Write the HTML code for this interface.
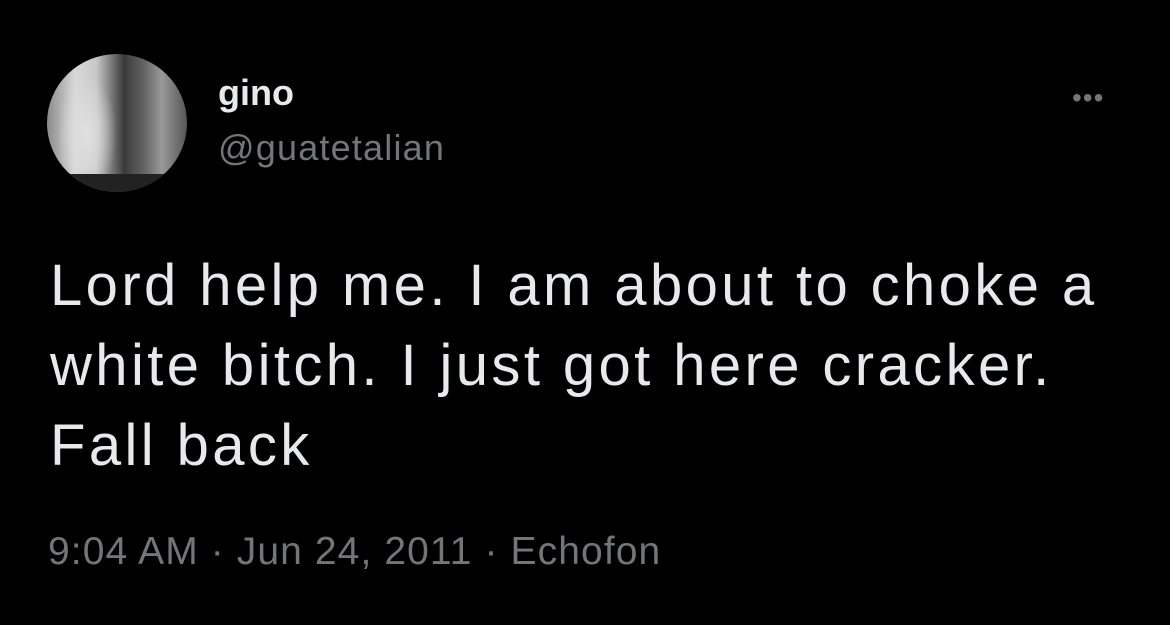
<!DOCTYPE html>
<html><head><style>
body{margin:0;width:1170px;height:625px;background:#000;overflow:hidden;font-family:"Liberation Sans",sans-serif;position:relative}
.av{position:absolute;left:47px;top:54px;width:140px;height:138px;border-radius:50%;overflow:hidden;background:radial-gradient(ellipse 30px 60px at 40px 80px,#e0e0e0,rgba(200,200,200,0) 100%),linear-gradient(90deg,#8a8a8a 0%,#d8d8d8 20%,#c8c8c8 35%,#3a3a3a 55%,#666 70%,#999 82%,#555 100%)}
.av:after{content:"";position:absolute;left:0;right:0;bottom:0;height:18px;background:#222}
.name{position:absolute;left:218px;top:72px;color:#e7e9ea;font-weight:bold;font-size:36px}
.handle{position:absolute;left:218px;top:127px;color:#71767b;font-size:36px;letter-spacing:1.2px}
.dots{position:absolute;left:1072px;top:82px;color:#71767b;font-size:28px;letter-spacing:1px}
.txt{position:absolute;left:50px;top:246px;color:#e7e9ea;font-size:58px;line-height:80px;width:1120px;letter-spacing:3.4px;white-space:nowrap}
.ts{position:absolute;left:48px;top:530px;color:#71767b;font-size:39px;letter-spacing:1.1px}
</style></head><body>
<div class="av"></div>
<div class="name">gino</div>
<div class="handle">@guatetalian</div>
<div class="dots">•••</div>
<div class="txt">Lord help me. I am about to choke a<br>white bitch. I just got here cracker.<br>Fall back</div>
<div class="ts">9:04 AM · Jun 24, 2011 · Echofon</div>
</body></html>
